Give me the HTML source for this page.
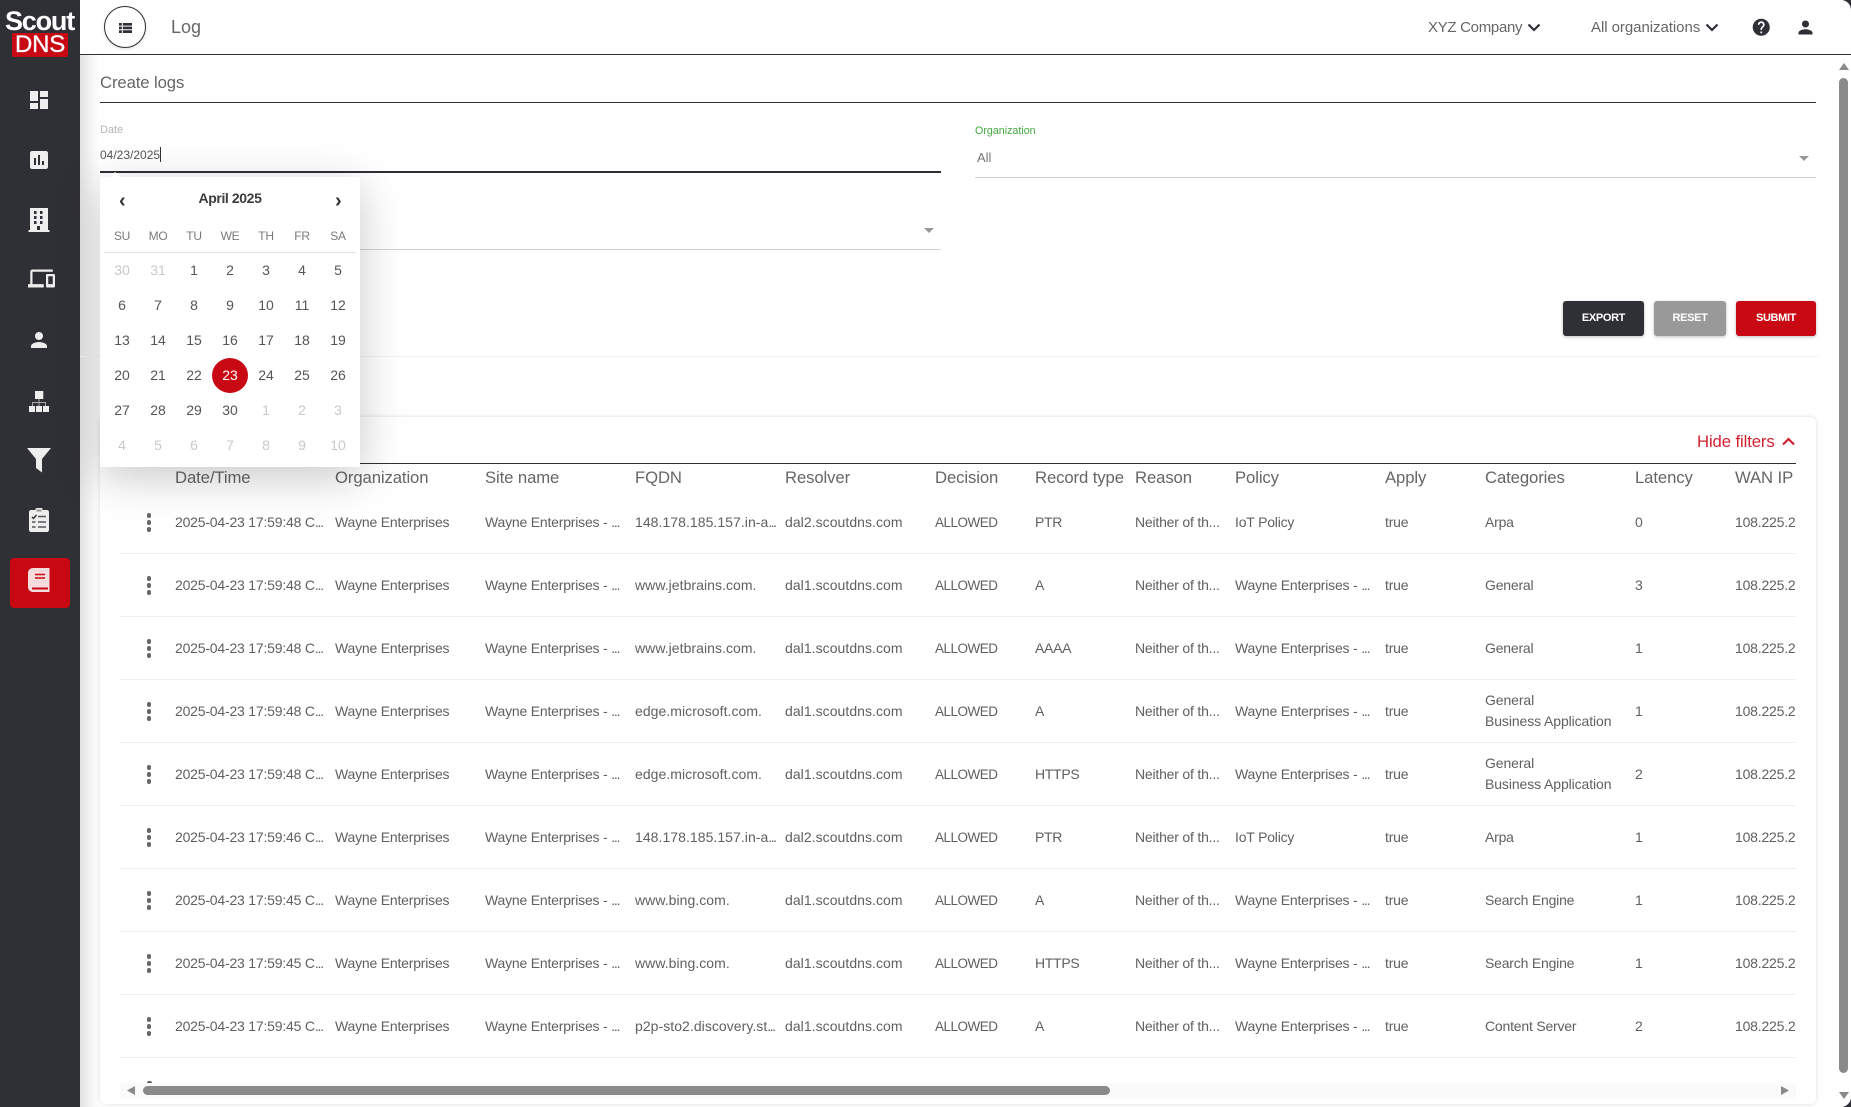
<!DOCTYPE html>
<html lang="en"><head><meta charset="utf-8"><title>Log</title>
<style>
*{box-sizing:border-box}
html,body{margin:0;padding:0;width:1851px;height:1107px;overflow:hidden;background:#fff;font-family:"Liberation Sans",sans-serif;color:#555}
.a{position:absolute}
.t{position:absolute;white-space:nowrap;line-height:1}
svg{position:absolute;display:block}
.hd{position:absolute;top:469px;left:120px;width:1676px;height:20px;display:flex;overflow:hidden;font-size:16.700px;line-height:18px;color:#666}
.r{position:absolute;left:120px;width:1676px;height:63px;border-bottom:1px solid #eee;display:flex;align-items:center;overflow:hidden;font-size:14px;color:#606060}
.hd>div,.r>div{flex:none;white-space:nowrap;overflow:hidden;letter-spacing:-.2px}
.hd>div{letter-spacing:-.1px}
.hd>div:nth-child(1),.r>div:nth-child(1){width:55px}
.hd>div:nth-child(2),.r>div:nth-child(2){width:160px}
.hd>div:nth-child(3),.r>div:nth-child(3),.hd>div:nth-child(4),.r>div:nth-child(4),.hd>div:nth-child(5),.r>div:nth-child(5),.hd>div:nth-child(6),.r>div:nth-child(6){width:150px}
.hd>div:nth-child(7),.r>div:nth-child(7),.hd>div:nth-child(8),.r>div:nth-child(8),.hd>div:nth-child(9),.r>div:nth-child(9){width:100px}
.hd>div:nth-child(10),.r>div:nth-child(10){width:150px}
.hd>div:nth-child(11),.r>div:nth-child(11){width:100px}
.hd>div:nth-child(12),.r>div:nth-child(12){width:150px}
.hd>div:nth-child(13),.r>div:nth-child(13){width:100px}
.hd>div:nth-child(14),.r>div:nth-child(14){width:61px}
.r>div:nth-child(5),.r>div:nth-child(6){letter-spacing:.05px}
.r>div:nth-child(7){font-size:13.500px;letter-spacing:-.5px}
.r>div:nth-child(8){letter-spacing:-.3px}
s{text-decoration:none;letter-spacing:-1.200px}
.r>div:nth-child(5) s{letter-spacing:-1.500px}
.k{position:relative;height:20px}
.k i{position:absolute;left:26.700px;width:4.600px;height:4.600px;border-radius:50%;background:#666}
.k i:nth-child(1){top:1px}.k i:nth-child(2){top:8px}.k i:nth-child(3){top:15px}
.r>div.two{line-height:21px;letter-spacing:-.1px}
.btn{position:absolute;top:301px;height:35px;border-radius:3px;color:#fff;font-size:11px;font-weight:bold;letter-spacing:-.35px;text-align:center;line-height:35px;box-shadow:0 1px 3px rgba(0,0,0,.25)}
.cal{position:absolute;left:100px;top:177px;width:260px;height:290px;background:#fff;border-radius:2px;box-shadow:0 10px 45px rgba(0,0,0,.22);z-index:5}
.w{position:absolute;top:52px;width:36px;text-align:center;font-size:12px;line-height:14px;color:#7a7a7a;letter-spacing:-.3px}
.d{position:absolute;width:36px;text-align:center;font-size:14px;line-height:16px;color:#555}
.o{color:#c9c9c9}
</style></head><body>

<!-- content shadows -->
<div class="a" style="left:80px;top:55px;width:20px;height:1052px;background:linear-gradient(90deg,#e2e2e2,#f8f8f8 70%,#fff)"></div>
<div class="a" style="left:80px;top:356px;width:1740px;height:1px;background:#f3f3f3"></div>
<div class="a" style="left:100px;top:417px;width:1716px;height:687px;background:#fff;border-radius:6px;box-shadow:0 0 5px rgba(0,0,0,.14)"></div>

<!-- sidebar -->
<div class="a" style="left:0;top:0;width:80px;height:1107px;background:#2f2f36"></div>
<div class="t" style="left:5px;top:7px;font-size:27px;font-weight:bold;letter-spacing:-1.200px;color:#fff;line-height:28px">Scout</div>
<div class="a" style="left:12px;top:33px;width:56px;height:24px;background:#c80914;border-radius:2px;color:#fff;font-size:24px;line-height:24px;text-align:center;letter-spacing:-.2px;-webkit-text-stroke:.3px #fff">DNS</div>

<svg style="left:27px;top:88px" width="24" height="24" viewBox="0 0 24 24" fill="#eee"><path d="M3 13h8V3H3v10zm0 8h8v-6H3v6zm10 0h8V11h-8v10zm0-18v6h8V3h-8z"/></svg>
<svg style="left:27px;top:148px" width="24" height="24" viewBox="0 0 24 24" fill="#eee"><path d="M19 3H5c-1.100 0-2 .9-2 2v14c0 1.100.9 2 2 2h14c1.100 0 2-.9 2-2V5c0-1.100-.9-2-2-2zM9 17H7v-7h2v7zm4 0h-2V7h2v10zm4 0h-2v-4h2v4z"/></svg>
<svg style="left:28px;top:207px" width="22" height="26" viewBox="0 0 22 26" fill="#eee"><path fill-rule="evenodd" d="M2 1h18v22h1.500v2H.5v-2H2zM6 4v3h2.500V4zm6 0v3h2.500V4zM6 9v3h2.500V9zm6 0v3h2.500V9zM6 14v3h2.500v-3zm6 0v3h2.500v-3zM9 19v4h3v-4z"/></svg>
<svg style="left:28px;top:265px" width="27" height="27" viewBox="0 0 24 24" fill="#eee"><path d="M4 6h18V4H4c-1.100 0-2 .9-2 2v11H0v3h14v-3H4V6zm19 2h-6c-.55 0-1 .45-1 1v10c0 .55.45 1 1 1h6c.55 0 1-.45 1-1V9c0-.55-.45-1-1-1zm-1 9h-4v-7h4v7z"/></svg>
<svg style="left:27px;top:328px" width="24" height="24" viewBox="0 0 24 24" fill="#eee"><path d="M12 12c2.210 0 4-1.790 4-4s-1.790-4-4-4-4 1.790-4 4 1.790 4 4 4zm0 2c-2.670 0-8 1.340-8 4v2h16v-2c0-2.660-5.330-4-8-4z"/></svg>
<svg style="left:29px;top:391px" width="20" height="21" viewBox="0 0 20 21" fill="#eee"><rect x="6" y="0" width="8.300" height="8"/><rect x="0" y="15" width="6" height="6"/><rect x="7" y="15" width="6" height="6"/><rect x="14" y="15" width="6" height="6"/><path d="M9.500 8h1v3H17v4h-1v-3h-5.500v3h-1v-3H4v3H3v-4h6.500z" fill="#a9a9ad"/></svg>
<svg style="left:27px;top:448px" width="24" height="25" viewBox="0 0 24 25" fill="#eee"><path d="M0 0h24L15 11v13.500L9 20V11z"/></svg>
<svg style="left:29px;top:508px" width="20" height="24" viewBox="0 0 20 24"><path d="M2 2h4.500V1c0-.6.4-1 1-1h5c.6 0 1 .4 1 1v1H18c1.100 0 2 .9 2 2v18c0 1.100-.9 2-2 2H2c-1.100 0-2-.9-2-2V4c0-1.100.9-2 2-2z" fill="#eee"/><path d="M7.500 1.500h5v2h-5z" fill="#2f2f36" opacity=".45"/><path d="M3 9l1.500 1.500L7.500 7" stroke="#2f2f36" stroke-width="1.400" fill="none"/><path d="M9 8.500h8M3 14h3.500M9 14h8M3 19h3.500M9 19h8" stroke="#55555c" stroke-width="1.400"/></svg>
<div class="a" style="left:10px;top:558px;width:60px;height:50px;background:#c80914;border-radius:4px"></div>
<svg style="left:28px;top:568px" width="22" height="24" viewBox="0 0 22 24"><path d="M5 0h16.500v24H5c-2.800 0-5-2.200-5-5V5c0-2.800 2.200-5 5-5z" fill="#f4dcdc"/><path d="M7 6.500h10M7 10h10" stroke="#c80914" stroke-width="1.500"/><path d="M4 19.500h16v2H4z" fill="#c80914"/></svg>

<!-- header -->
<div class="a" style="left:80px;top:54px;width:1771px;height:1px;background:#2f2f36"></div>
<div class="a" style="left:104px;top:6px;width:42px;height:42px;border:1.500px solid #2f2f36;border-radius:50%;background:#fff;box-shadow:0 1px 3px rgba(0,0,0,.15)"></div>
<svg style="left:119px;top:23px" width="13" height="10" viewBox="0 0 13 10" fill="#2f2f36"><path d="M0 0h2.800v2.600H0zM3.800 0H13v2.600H3.800zM0 3.600h2.800v2.700H0zM3.800 3.600H13v2.700H3.800zM0 7.300h2.800V10H0zM3.800 7.300H13V10H3.800z"/></svg>
<div class="t" style="left:171px;top:17px;font-size:18px;line-height:20px;color:#666">Log</div>
<div class="t" style="left:1428px;top:18.500px;font-size:15px;line-height:18px;color:#666;letter-spacing:-.3px">XYZ Company</div>
<svg style="left:1527px;top:23px" width="14" height="9" viewBox="0 0 14 9"><path d="M1.500 1.500L7 7l5.500-5.500" fill="none" stroke="#2f2f36" stroke-width="2.200"/></svg>
<div class="t" style="left:1591px;top:18.500px;font-size:15px;line-height:18px;color:#666;letter-spacing:-.05px">All organizations</div>
<svg style="left:1705px;top:23px" width="14" height="9" viewBox="0 0 14 9"><path d="M1.500 1.500L7 7l5.500-5.500" fill="none" stroke="#2f2f36" stroke-width="2.200"/></svg>
<svg style="left:1751px;top:17px" width="20.500" height="20.500" viewBox="0 0 24 24" fill="#2f2f36"><path d="M12 2C6.480 2 2 6.480 2 12s4.480 10 10 10 10-4.480 10-10S17.520 2 12 2zm1 17h-2v-2h2v2zm2.070-7.750l-.9.920C13.450 12.900 13 13.500 13 15h-2v-.5c0-1.100.45-2.100 1.170-2.830l1.240-1.260c.37-.36.59-.86.59-1.410 0-1.100-.9-2-2-2s-2 .9-2 2H8c0-2.210 1.790-4 4-4s4 1.790 4 4c0 .88-.36 1.680-.93 2.250z"/></svg>
<svg style="left:1795px;top:17px" width="21" height="21" viewBox="0 0 24 24" fill="#2f2f36"><path d="M12 12c2.210 0 4-1.790 4-4s-1.790-4-4-4-4 1.790-4 4 1.790 4 4 4zm0 2c-2.670 0-8 1.340-8 4v2h16v-2c0-2.660-5.330-4-8-4z"/></svg>

<!-- create form -->
<div class="t" style="left:100px;top:74px;font-size:16.700px;line-height:18px;color:#666;letter-spacing:-.1px">Create logs</div>
<div class="a" style="left:100px;top:102px;width:1716px;height:1px;background:#2f2f36"></div>
<div class="t" style="left:100px;top:124px;font-size:11px;line-height:12px;color:#b5b5b5">Date</div>
<div class="t" style="left:100px;top:148px;font-size:12px;line-height:14px;color:#555">04/23/2025</div>
<div class="a" style="left:160px;top:147px;width:1px;height:15px;background:#333"></div>
<div class="a" style="left:100px;top:171px;width:841px;height:2px;background:#2f2f36"></div>
<div class="t" style="left:975px;top:125px;font-size:10.700px;line-height:12px;color:#43a83f">Organization</div>
<div class="t" style="left:977px;top:150px;font-size:13px;line-height:15px;color:#777">All</div>
<div class="a" style="left:975px;top:177px;width:841px;height:1px;background:#d2d2d2"></div>
<svg style="left:1799px;top:156px" width="10" height="5" viewBox="0 0 10 5" fill="#999"><path d="M0 0h10L5 5z"/></svg>
<div class="a" style="left:100px;top:249px;width:841px;height:1px;background:#d2d2d2"></div>
<svg style="left:924px;top:228px" width="10" height="5" viewBox="0 0 10 5" fill="#999"><path d="M0 0h10L5 5z"/></svg>
<div class="btn" style="left:1563px;width:81px;background:#2f2f36">EXPORT</div>
<div class="btn" style="left:1654px;width:72px;background:#999">RESET</div>
<div class="btn" style="left:1736px;width:80px;background:#c80914">SUBMIT</div>

<!-- table -->
<div class="t" style="left:1697px;top:432.500px;font-size:16.700px;line-height:18px;color:#d3202f;letter-spacing:-.1px">Hide filters</div>
<svg style="left:1782px;top:436.500px" width="13" height="9" viewBox="0 0 13 9"><path d="M1 7.500L6.500 2 12 7.500" fill="none" stroke="#d3202f" stroke-width="2.200"/></svg>
<div class="a" style="left:120px;top:463px;width:1676px;height:1px;background:#2f2f36"></div>
<div class="hd"><div></div><div>Date/Time</div><div>Organization</div><div>Site name</div><div>FQDN</div><div>Resolver</div><div>Decision</div><div>Record type</div><div>Reason</div><div>Policy</div><div>Apply</div><div>Categories</div><div>Latency</div><div>WAN IP</div></div>

<div class="r" style="top:491px"><div class="k"><i></i><i></i><i></i></div><div>2025-04-23 17:59:48 C<s>...</s></div><div>Wayne Enterprises</div><div>Wayne Enterprises - <s>...</s></div><div>148.178.185.157.in-a<s>...</s></div><div>dal2.scoutdns.com</div><div>ALLOWED</div><div>PTR</div><div>Neither of th...</div><div>IoT Policy</div><div>true</div><div>Arpa</div><div>0</div><div>108.225.2</div></div>
<div class="r" style="top:554px"><div class="k"><i></i><i></i><i></i></div><div>2025-04-23 17:59:48 C<s>...</s></div><div>Wayne Enterprises</div><div>Wayne Enterprises - <s>...</s></div><div>www.jetbrains.com.</div><div>dal1.scoutdns.com</div><div>ALLOWED</div><div>A</div><div>Neither of th...</div><div>Wayne Enterprises - <s>...</s></div><div>true</div><div>General</div><div>3</div><div>108.225.2</div></div>
<div class="r" style="top:617px"><div class="k"><i></i><i></i><i></i></div><div>2025-04-23 17:59:48 C<s>...</s></div><div>Wayne Enterprises</div><div>Wayne Enterprises - <s>...</s></div><div>www.jetbrains.com.</div><div>dal1.scoutdns.com</div><div>ALLOWED</div><div>AAAA</div><div>Neither of th...</div><div>Wayne Enterprises - <s>...</s></div><div>true</div><div>General</div><div>1</div><div>108.225.2</div></div>
<div class="r" style="top:680px"><div class="k"><i></i><i></i><i></i></div><div>2025-04-23 17:59:48 C<s>...</s></div><div>Wayne Enterprises</div><div>Wayne Enterprises - <s>...</s></div><div>edge.microsoft.com.</div><div>dal1.scoutdns.com</div><div>ALLOWED</div><div>A</div><div>Neither of th...</div><div>Wayne Enterprises - <s>...</s></div><div>true</div><div class="two">General<br>Business Application</div><div>1</div><div>108.225.2</div></div>
<div class="r" style="top:743px"><div class="k"><i></i><i></i><i></i></div><div>2025-04-23 17:59:48 C<s>...</s></div><div>Wayne Enterprises</div><div>Wayne Enterprises - <s>...</s></div><div>edge.microsoft.com.</div><div>dal1.scoutdns.com</div><div>ALLOWED</div><div>HTTPS</div><div>Neither of th...</div><div>Wayne Enterprises - <s>...</s></div><div>true</div><div class="two">General<br>Business Application</div><div>2</div><div>108.225.2</div></div>
<div class="r" style="top:806px"><div class="k"><i></i><i></i><i></i></div><div>2025-04-23 17:59:46 C<s>...</s></div><div>Wayne Enterprises</div><div>Wayne Enterprises - <s>...</s></div><div>148.178.185.157.in-a<s>...</s></div><div>dal2.scoutdns.com</div><div>ALLOWED</div><div>PTR</div><div>Neither of th...</div><div>IoT Policy</div><div>true</div><div>Arpa</div><div>1</div><div>108.225.2</div></div>
<div class="r" style="top:869px"><div class="k"><i></i><i></i><i></i></div><div>2025-04-23 17:59:45 C<s>...</s></div><div>Wayne Enterprises</div><div>Wayne Enterprises - <s>...</s></div><div>www.bing.com.</div><div>dal1.scoutdns.com</div><div>ALLOWED</div><div>A</div><div>Neither of th...</div><div>Wayne Enterprises - <s>...</s></div><div>true</div><div>Search Engine</div><div>1</div><div>108.225.2</div></div>
<div class="r" style="top:932px"><div class="k"><i></i><i></i><i></i></div><div>2025-04-23 17:59:45 C<s>...</s></div><div>Wayne Enterprises</div><div>Wayne Enterprises - <s>...</s></div><div>www.bing.com.</div><div>dal1.scoutdns.com</div><div>ALLOWED</div><div>HTTPS</div><div>Neither of th...</div><div>Wayne Enterprises - <s>...</s></div><div>true</div><div>Search Engine</div><div>1</div><div>108.225.2</div></div>
<div class="r" style="top:995px"><div class="k"><i></i><i></i><i></i></div><div>2025-04-23 17:59:45 C<s>...</s></div><div>Wayne Enterprises</div><div>Wayne Enterprises - <s>...</s></div><div>p2p-sto2.discovery.st<s>...</s></div><div>dal1.scoutdns.com</div><div>ALLOWED</div><div>A</div><div>Neither of th...</div><div>Wayne Enterprises - <s>...</s></div><div>true</div><div>Content Server</div><div>2</div><div>108.225.2</div></div>

<!-- horizontal scrollbar -->
<div class="a" style="left:147px;top:1081px;width:4.600px;height:2px;border-radius:2px 2px 0 0;background:#666"></div>
<div class="a" style="left:120px;top:1083px;width:1676px;height:15px;background:#fafafa"></div>
<div class="a" style="left:143px;top:1086px;width:967px;height:9px;background:#8a8a8a;border-radius:5px"></div>
<svg style="left:127px;top:1086px" width="8" height="9" viewBox="0 0 8 9" fill="#8a8a8a"><path d="M8 0v9L0 4.500z"/></svg>
<svg style="left:1781px;top:1086px" width="8" height="9" viewBox="0 0 8 9" fill="#8a8a8a"><path d="M0 0v9l8-4.500z"/></svg>

<!-- page scrollbar -->
<div class="a" style="left:1839px;top:78px;width:9px;height:995px;background:#8a8a8a;border-radius:5px"></div>
<svg style="left:1839px;top:63px" width="10" height="7" viewBox="0 0 10 7" fill="#8a8a8a"><path d="M0 7h10L5 0z"/></svg>
<svg style="left:1839px;top:1092px" width="10" height="7" viewBox="0 0 10 7" fill="#8a8a8a"><path d="M0 0h10L5 7z"/></svg>
<svg style="left:1841px;top:1097px" width="10" height="10" viewBox="0 0 10 10" fill="#2f2f36"><path d="M10 0v10H0c5 0 10-4 10-10z"/></svg>
<svg style="left:1841px;top:0" width="10" height="10" viewBox="0 0 10 10" fill="#2f2f36"><path d="M10 10V0H0c5 0 10 4 10 10z"/></svg>

<!-- calendar -->
<svg style="left:110px;top:172px;z-index:6" width="10" height="5" viewBox="0 0 10 5" fill="#fff"><path d="M0 5h10L5 0z"/></svg>
<div class="cal">
<div class="t" style="left:0;width:260px;text-align:center;top:13px;font-size:14px;line-height:16px;font-weight:bold;color:#3c3c3c;letter-spacing:-.4px">April 2025</div>
<div class="t" style="left:19px;top:12px;font-size:20px;line-height:24px;font-weight:bold;color:#333">‹</div>
<div class="t" style="left:235px;top:12px;font-size:20px;line-height:24px;font-weight:bold;color:#333">›</div>
<div class="w" style="left:4px">SU</div><div class="w" style="left:40px">MO</div><div class="w" style="left:76px">TU</div><div class="w" style="left:112px">WE</div><div class="w" style="left:148px">TH</div><div class="w" style="left:184px">FR</div><div class="w" style="left:220px">SA</div>
<div class="a" style="left:4px;top:75px;width:252px;height:1px;background:#e2e2e2"></div>

<div class="d o" style="left:4px;top:85px">30</div><div class="d o" style="left:40px;top:85px">31</div><div class="d" style="left:76px;top:85px">1</div><div class="d" style="left:112px;top:85px">2</div><div class="d" style="left:148px;top:85px">3</div><div class="d" style="left:184px;top:85px">4</div><div class="d" style="left:220px;top:85px">5</div>
<div class="d" style="left:4px;top:120px">6</div><div class="d" style="left:40px;top:120px">7</div><div class="d" style="left:76px;top:120px">8</div><div class="d" style="left:112px;top:120px">9</div><div class="d" style="left:148px;top:120px">10</div><div class="d" style="left:184px;top:120px">11</div><div class="d" style="left:220px;top:120px">12</div>
<div class="d" style="left:4px;top:155px">13</div><div class="d" style="left:40px;top:155px">14</div><div class="d" style="left:76px;top:155px">15</div><div class="d" style="left:112px;top:155px">16</div><div class="d" style="left:148px;top:155px">17</div><div class="d" style="left:184px;top:155px">18</div><div class="d" style="left:220px;top:155px">19</div>
<div class="a" style="left:112px;top:181px;width:36px;height:35px;border-radius:50%;background:#c80914"></div>
<div class="d" style="left:4px;top:190px">20</div><div class="d" style="left:40px;top:190px">21</div><div class="d" style="left:76px;top:190px">22</div><div class="d" style="left:112px;top:190px;color:#fff">23</div><div class="d" style="left:148px;top:190px">24</div><div class="d" style="left:184px;top:190px">25</div><div class="d" style="left:220px;top:190px">26</div>
<div class="d" style="left:4px;top:225px">27</div><div class="d" style="left:40px;top:225px">28</div><div class="d" style="left:76px;top:225px">29</div><div class="d" style="left:112px;top:225px">30</div><div class="d o" style="left:148px;top:225px">1</div><div class="d o" style="left:184px;top:225px">2</div><div class="d o" style="left:220px;top:225px">3</div>
<div class="d o" style="left:4px;top:260px">4</div><div class="d o" style="left:40px;top:260px">5</div><div class="d o" style="left:76px;top:260px">6</div><div class="d o" style="left:112px;top:260px">7</div><div class="d o" style="left:148px;top:260px">8</div><div class="d o" style="left:184px;top:260px">9</div><div class="d o" style="left:220px;top:260px">10</div>
</div>
</body></html>
